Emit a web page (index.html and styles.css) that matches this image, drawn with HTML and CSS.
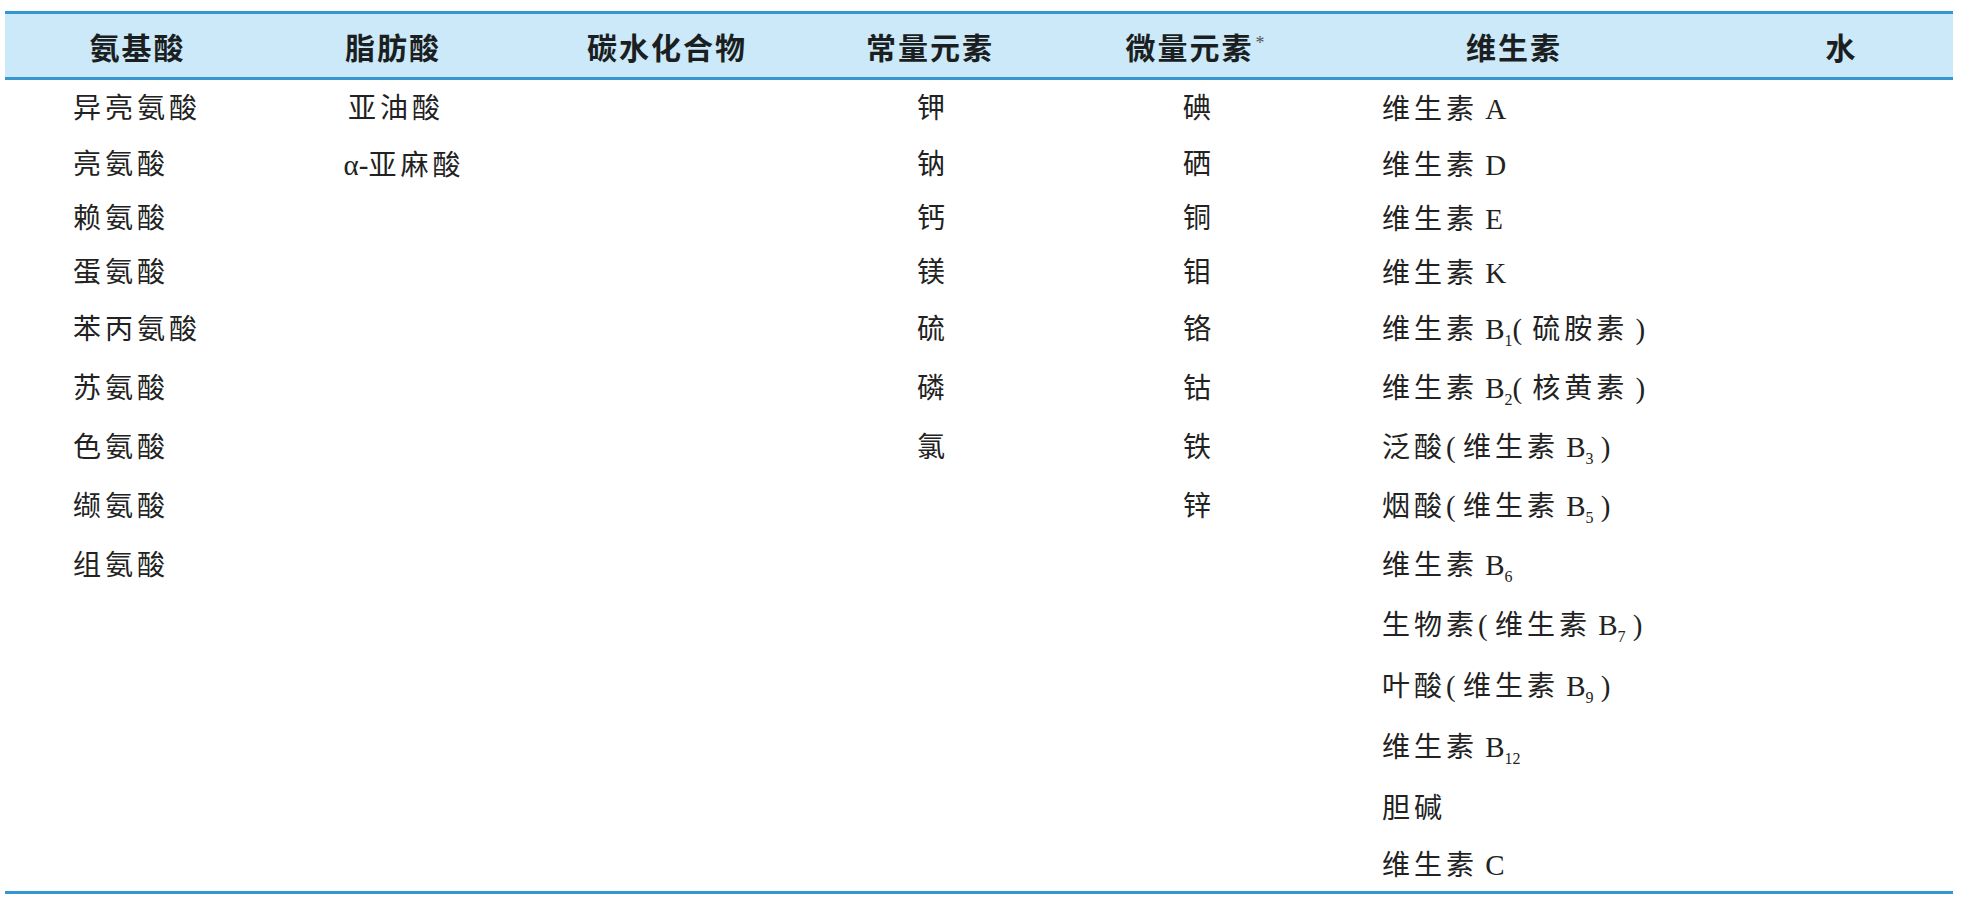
FILE: index.html
```html
<!DOCTYPE html>
<html lang="zh-CN">
<head>
<meta charset="utf-8">
<title>必需营养素</title>
<link rel="stylesheet" href="styles.css">
</head>
<body>
<table class="nutri">
  <colgroup>
    <col class="w1"><col class="w2"><col class="w3"><col class="w4"><col class="w5"><col class="w6"><col class="w7">
  </colgroup>
  <thead>
    <tr>
      <th>氨基酸</th>
      <th>脂肪酸</th>
      <th>碳水化合物</th>
      <th>常量元素</th>
      <th>微量元素<sup class="note">*</sup></th>
      <th>维生素</th>
      <th class="water">水</th>
    </tr>
  </thead>
  <tbody>
    <tr class="r1"><td class="left1">异亮氨酸</td><td class="mid">亚油酸</td><td></td><td class="mid">钾</td><td class="mid">碘</td><td class="left6">维生素<span class="lat"> A</span></td><td></td></tr>
    <tr class="rs"><td class="left1">亮氨酸</td><td class="mid alpha"><span class="lat">α-</span>亚麻酸</td><td></td><td class="mid">钠</td><td class="mid">硒</td><td class="left6">维生素<span class="lat"> D</span></td><td></td></tr>
    <tr class="rs"><td class="left1">赖氨酸</td><td></td><td></td><td class="mid">钙</td><td class="mid">铜</td><td class="left6">维生素<span class="lat"> E</span></td><td></td></tr>
    <tr class="rs"><td class="left1">蛋氨酸</td><td></td><td></td><td class="mid">镁</td><td class="mid">钼</td><td class="left6">维生素<span class="lat"> K</span></td><td></td></tr>
    <tr class="rm"><td class="left1">苯丙氨酸</td><td></td><td></td><td class="mid">硫</td><td class="mid">铬</td><td class="left6">维生素<span class="lat"> B<sub>1</sub>(</span><span class="gap"></span>硫胺素<span class="lat"> )</span></td><td></td></tr>
    <tr class="rm"><td class="left1">苏氨酸</td><td></td><td></td><td class="mid">磷</td><td class="mid">钴</td><td class="left6">维生素<span class="lat"> B<sub>2</sub>(</span><span class="gap"></span>核黄素<span class="lat"> )</span></td><td></td></tr>
    <tr class="rm"><td class="left1">色氨酸</td><td></td><td></td><td class="mid">氯</td><td class="mid">铁</td><td class="left6">泛酸<span class="lat">( </span>维生素<span class="lat"> B<sub>3</sub> )</span></td><td></td></tr>
    <tr class="rm"><td class="left1">缬氨酸</td><td></td><td></td><td></td><td class="mid">锌</td><td class="left6">烟酸<span class="lat">( </span>维生素<span class="lat"> B<sub>5</sub> )</span></td><td></td></tr>
    <tr class="rm"><td class="left1">组氨酸</td><td></td><td></td><td></td><td></td><td class="left6">维生素<span class="lat"> B<sub>6</sub></span></td><td></td></tr>
    <tr class="rl"><td></td><td></td><td></td><td></td><td></td><td class="left6">生物素<span class="lat">( </span>维生素<span class="lat"> B<sub>7</sub> )</span></td><td></td></tr>
    <tr class="rl"><td></td><td></td><td></td><td></td><td></td><td class="left6">叶酸<span class="lat">( </span>维生素<span class="lat"> B<sub>9</sub> )</span></td><td></td></tr>
    <tr class="rl"><td></td><td></td><td></td><td></td><td></td><td class="left6">维生素<span class="lat"> B<sub>12</sub></span></td><td></td></tr>
    <tr class="rl"><td></td><td></td><td></td><td></td><td></td><td class="left6">胆碱</td><td></td></tr>
    <tr class="rlast"><td></td><td></td><td></td><td></td><td></td><td class="left6">维生素<span class="lat"> C</span></td><td></td></tr>
  </tbody>
</table>
</body>
</html>
```

FILE: styles.css
```css
html, body {
  margin: 0;
  padding: 0;
  background: #ffffff;
}

body {
  padding: 11px 0 0 5px;
}

.nutri {
  width: 1948px;
  border-collapse: collapse;
  table-layout: fixed;
  font-family: "Liberation Serif", "Noto Sans CJK SC", serif;
  color: #222222;
}

.w1 { width: 265px; }
.w2 { width: 246px; }
.w3 { width: 302px; }
.w4 { width: 224px; }
.w5 { width: 308px; }
.w6 { width: 328px; }
.w7 { width: 275px; }

.nutri thead tr {
  background: #cbe9f8;
  border-top: 3px solid #3597cf;
  border-bottom: 3px solid #3597cf;
}

.nutri th {
  height: 63px;
  padding: 0;
  font-family: "Noto Sans CJK SC", sans-serif;
  font-weight: 700;
  font-size: 30px;
  letter-spacing: 2px;
  line-height: 1;
  color: #1c1f22;
  text-align: center;
  vertical-align: middle;
}

.nutri th.water {
  padding-left: 52px;
}

.note {
  font-family: "Liberation Serif", serif;
  font-size: 18px;
  font-weight: 400;
  color: #555;
  vertical-align: 10px;
  margin-left: 2px;
}

.nutri td {
  padding: 0;
  font-size: 28px;
  letter-spacing: 4px;
  line-height: 1;
  font-weight: 400;
  vertical-align: middle;
  white-space: nowrap;
}

.r1 td { height: 58px; }
.rs td { height: 54px; }
.rm td { height: 59px; }
.rl td { height: 61px; }
.rlast td { height: 52px; }

.rlast {
  border-bottom: 3px solid #3597cf;
}

.left1 {
  text-align: left;
  padding-left: 68px !important;
}

.left6 {
  text-align: left;
  padding-left: 32px !important;
}

.mid {
  text-align: center;
  padding-left: 6px !important;
}

.alpha {
  padding-left: 22px !important;
}

.lat {
  font-family: "Liberation Serif", serif;
  font-size: 29px;
  letter-spacing: 0;
  white-space: pre;
}

.gap {
  display: inline-block;
  width: 10px;
}

.nutri sub {
  font-size: 16px;
  letter-spacing: 0;
  vertical-align: -7px;
  line-height: 0;
}
```
